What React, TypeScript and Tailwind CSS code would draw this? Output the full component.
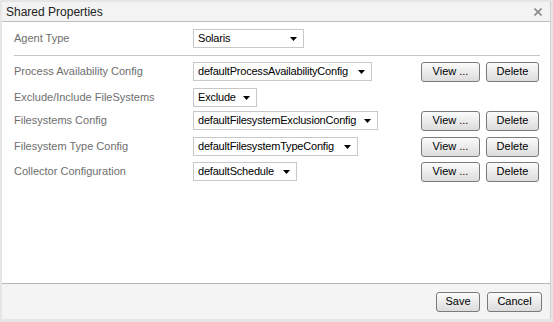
import React from "react";

const font = { fontFamily: '"Liberation Sans", Arial, sans-serif' };

function Select({ value, width }: { value: string; width: number }) {
  return (
    <div
      className="flex h-[19px] items-center justify-between gap-[4px] border border-[#c8c8c8] bg-white pl-[4px] pr-[6px] text-[11px] tracking-[-0.2px] text-black"
      style={{ width }}
    >
      <span className="whitespace-nowrap">{value}</span>
      <svg width="7" height="4" viewBox="0 0 7 4" className="shrink-0" aria-hidden>
        <path d="M0 0h7L3.5 4z" fill="#000" />
      </svg>
    </div>
  );
}

function Btn({ label, w }: { label: string; w: string }) {
  return (
    <button
      className={`flex h-[20px] ${w} items-center justify-center rounded-[3px] border border-[#7a7a7a] bg-gradient-to-b from-[#fbfbfb] to-[#dcdcdc] text-[11px] text-black`}
    >
      {label}
    </button>
  );
}

function Row({
  label,
  value,
  width,
  buttons,
  mt,
}: {
  label: string;
  value: string;
  width: number;
  buttons?: boolean;
  mt: string;
}) {
  return (
    <div className={`flex h-[19px] items-center ${mt}`}>
      <div className="w-[179px] text-[11px] text-[#6e6e6e]">{label}</div>
      <Select value={value} width={width} />
      {buttons && (
        <div className="ml-auto flex gap-[6px] pr-[1px]">
          <Btn label="View ..." w="w-[59px]" />
          <Btn label="Delete" w="w-[53px]" />
        </div>
      )}
    </div>
  );
}

export default function App() {
  return (
    <div className="h-[322px] w-[553px] bg-[#e6e6e6] pl-[2px] pt-[2px] pr-[2px] pb-[3px]" style={font}>
      <div className="flex h-full flex-col border-r border-[#d0d0d0] bg-white">
        <div className="flex h-[20px] items-center justify-between border-b border-[#bdbdbd] bg-[#f3f3f3] pl-[4px] pr-[8px]">
          <span className="text-[12px] text-[#222]">Shared Properties</span>
          <svg width="8" height="8" viewBox="0 0 8 8" aria-hidden>
            <path d="M0.5 0.5l7 7M7.5 0.5l-7 7" stroke="#8a8a8a" strokeWidth="1.6" />
          </svg>
        </div>
        <div className="flex-1 pl-[12px] pr-[10px] pt-[7px]">
          <div className="flex h-[19px] items-center">
            <div className="w-[179px] text-[11px] text-[#6e6e6e]">Agent Type</div>
            <Select value="Solaris" width={111} />
          </div>
          <div className="mt-[7px] h-px bg-[#c6c6c6]" />
          <Row label="Process Availability Config" value="defaultProcessAvailabilityConfig" width={179} buttons mt="mt-[6px]" />
          <Row label="Exclude/Include FileSystems" value="Exclude" width={64} mt="mt-[7px]" />
          <Row label="Filesystems Config" value="defaultFilesystemExclusionConfig" width={185} buttons mt="mt-[4px]" />
          <Row label="Filesystem Type Config" value="defaultFilesystemTypeConfig" width={165} buttons mt="mt-[7px]" />
          <Row label="Collector Configuration" value="defaultSchedule" width={104} buttons mt="mt-[6px]" />
        </div>
        <div className="flex h-[36px] items-center justify-end gap-[7px] border-t border-[#b5b5b5] bg-[#f4f4f4] pr-[8px]">
          <Btn label="Save" w="w-[44px]" />
          <Btn label="Cancel" w="w-[55px]" />
        </div>
      </div>
    </div>
  );
}
